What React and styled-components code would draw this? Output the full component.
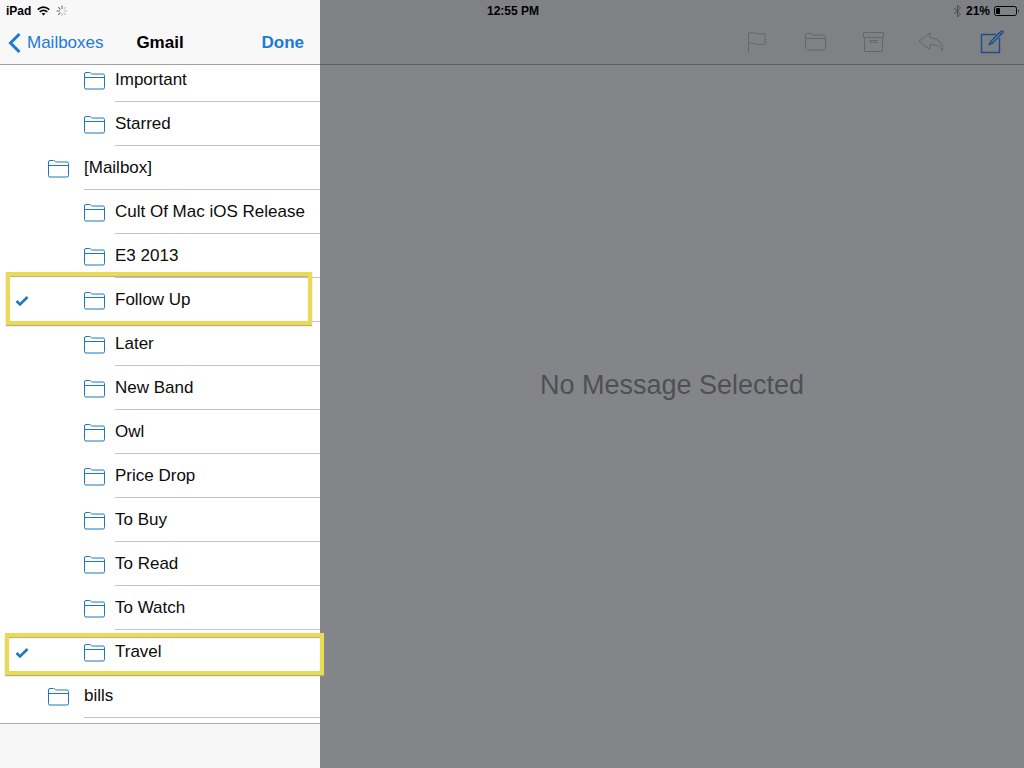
import React, { useState } from "react";
import styled, { createGlobalStyle } from "styled-components";

const folders = [
  { name: "Important", nested: true },
  { name: "Starred", nested: true },
  { name: "[Mailbox]" },
  { name: "Cult Of Mac iOS Release", nested: true },
  { name: "E3 2013", nested: true },
  { name: "Follow Up", nested: true, mark: "tall" },
  { name: "Later", nested: true },
  { name: "New Band", nested: true },
  { name: "Owl", nested: true },
  { name: "Price Drop", nested: true },
  { name: "To Buy", nested: true },
  { name: "To Read", nested: true },
  { name: "To Watch", nested: true },
  { name: "Travel", nested: true, mark: "wide" },
  { name: "bills" },
];

const FolderIcon = () => (
  <svg width="21" height="18" viewBox="0 0 21 18" fill="none" stroke="currentColor" aria-hidden="true">
    <path d="M.5 15.500V2Q.5.500 2 .5h3.500q1 0 1.500.7.5.8 1.500.8H19q1.500 0 1.500 1.500v12q0 1.500-1.500 1.500H2Q.5 17 .5 15.500z" />
    <path d="M.5 5.500h20" />
  </svg>
);

const FlagIcon = () => (
  <svg width="18" height="21" viewBox="0 0 18 21" fill="none" stroke="currentColor" aria-hidden="true">
    <path d="M.5 20.500V1C5-.5 11 3.500 17 1.500v10.500C11 14 5.500 10 .5 11.500" />
  </svg>
);

const ArchiveIcon = () => (
  <svg width="21" height="20" viewBox="0 0 21 20" fill="none" stroke="currentColor" aria-hidden="true">
    <path d="M.5.500h20v5H.5zM1.500 5.500v14h18v-14M7 8.500h7v2H7z" />
  </svg>
);

const ReplyIcon = () => (
  <svg width="26" height="20" viewBox="0 0 26 20" fill="none" stroke="currentColor" aria-hidden="true">
    <path d="M12 1v5C19 6 25 10 24.500 18.500c-2.500-4-6-6-12.500-6v5L1 9.200z" />
  </svg>
);

const ComposeIcon = () => (
  <svg width="24" height="24" viewBox="0 0 24 24" fill="none" stroke="currentColor" aria-hidden="true">
    <path d="M16 4.500H1.500v18h18V8" strokeWidth="1.400" />
    <path d="M9.500 14.500l1.200-3L21 1.200q1-.7 1.700 0t0 1.700L12.500 13.200zM19.500 2.700l1.700 1.700" strokeWidth="1.400" />
  </svg>
);

const WifiIcon = () => (
  <svg width="13" height="10" viewBox="0 0 13 10" fill="none" stroke="currentColor" aria-hidden="true">
    <path d="M.7 3.700q5.800-5 11.600 0M2.700 5.900q3.800-3.200 7.600 0" strokeWidth="1.600" />
    <path d="M6.500 9.500L4.500 7.600q2-1.400 4 0z" fill="currentColor" stroke="none" />
  </svg>
);

const Spinner = () => (
  <svg width="12" height="12" viewBox="0 0 12 12" stroke="#555" strokeLinecap="round" aria-hidden="true">
    {[0, 45, 90, 135, 180, 225, 270, 315].map((angle) => (
      <path
        key={angle}
        d="M6 1v2.500"
        opacity={angle > 0 && angle < 225 ? 0.35 : 0.9}
        transform={`rotate(${angle} 6 6)`}
      />
    ))}
  </svg>
);

const BluetoothIcon = () => (
  <svg width="9" height="14" viewBox="0 0 9 14" fill="none" stroke="#4c4d51" aria-hidden="true">
    <path d="M1 4l6.500 6L4.500 13V1l3 3L1 10" />
  </svg>
);

const BatteryIcon = () => (
  <svg width="26" height="10" viewBox="0 0 26 10" fill="none" stroke="currentColor" aria-hidden="true">
    <rect x=".5" y=".5" width="22" height="9" rx="2" />
    <rect x="2" y="2" width="4" height="6" rx="1" fill="currentColor" stroke="none" />
    <path d="M24 3q1.500 2 0 4z" fill="currentColor" stroke="none" />
  </svg>
);

const App = () => {
  const [checked, setChecked] = useState(["Follow Up", "Travel"]);

  const toggle = (name) => {
    setChecked(
      checked.includes(name)
        ? checked.filter((item) => item !== name)
        : [...checked, name]
    );
  };

  return (
    <>
      <GlobalStyle />
      <Screen>
        <StatusBar>
          <StatusGroup>
            iPad <WifiIcon /> <Spinner />
          </StatusGroup>
          <span>12:55 PM</span>
          <StatusGroup $end>
            <BluetoothIcon /> 21% <BatteryIcon />
          </StatusGroup>
        </StatusBar>

        <Sidebar>
          <SideHeader>
            <BackButton type="button">
              <svg width="13" height="20" viewBox="0 0 13 20" fill="none" stroke="currentColor" strokeWidth="3" aria-hidden="true">
                <path d="M11.500 1L2.500 10l9 9" />
              </svg>
              Mailboxes
            </BackButton>
            <Title>Gmail</Title>
            <DoneButton type="button">Done</DoneButton>
          </SideHeader>
          <List>
            {folders.map((folder) => (
              <Row key={folder.name}>
                <RowLabel>
                  <Tick>
                    <TickInput
                      type="checkbox"
                      checked={checked.includes(folder.name)}
                      onChange={() => toggle(folder.name)}
                    />
                    <svg width="14" height="12" viewBox="0 0 14 12" fill="none" stroke="currentColor" strokeWidth="2.500" aria-hidden="true">
                      <path d="M1.500 6L5 9.500l7.500-7.500" />
                    </svg>
                  </Tick>
                  <FolderCell $nested={folder.nested}>
                    <FolderIcon />
                  </FolderCell>
                  <Name>{folder.name}</Name>
                </RowLabel>
                {folder.mark && <Mark $wide={folder.mark === "wide"} />}
              </Row>
            ))}
          </List>
          <SideFooter />
        </Sidebar>

        <Detail>
          <Toolbar>
            <ToolButton type="button" aria-label="Flag"><FlagIcon /></ToolButton>
            <ToolButton type="button" aria-label="Move"><FolderIcon /></ToolButton>
            <ToolButton type="button" aria-label="Archive"><ArchiveIcon /></ToolButton>
            <ToolButton type="button" aria-label="Reply"><ReplyIcon /></ToolButton>
            <ToolButton type="button" aria-label="Compose" $active><ComposeIcon /></ToolButton>
          </Toolbar>
          <Empty>No Message Selected</Empty>
        </Detail>
      </Screen>
    </>
  );
};

const GlobalStyle = createGlobalStyle`
  * {
    box-sizing: border-box;
  }
  body {
    margin: 0;
    font-family: "Liberation Sans", Arial, sans-serif;
    color: #000;
  }
  button {
    font: inherit;
    background: none;
    border: 0;
    padding: 0;
    cursor: pointer;
  }
  svg {
    display: block;
    flex: none;
  }
`;

const Screen = styled.div`
  display: grid;
  grid-template-columns: 320px 1fr;
  grid-template-rows: 20px 1fr;
  height: 100vh;
  overflow: hidden;
`;

const StatusBar = styled.div`
  grid-area: 1 / 1 / 2 / 3;
  z-index: 3;
  display: grid;
  grid-template-columns: 1fr auto 1fr;
  align-items: center;
  padding: 2px 4px 0 6px;
  font-size: 12px;
  font-weight: bold;
`;

const StatusGroup = styled.div`
  display: flex;
  align-items: center;
  justify-content: ${(props) => (props.$end ? "flex-end" : "flex-start")};
  gap: ${(props) => (props.$end ? "4px" : "6px")};
`;

const Sidebar = styled.aside`
  grid-area: 1 / 1 / 3 / 2;
  z-index: 2;
  display: flex;
  flex-direction: column;
  min-height: 0;
  background: #fff;
`;

const SideHeader = styled.header`
  display: grid;
  grid-template-columns: 1fr auto 1fr;
  align-items: center;
  height: 65px;
  padding-top: 21px;
  background: #f8f8f9;
  border-bottom: 1px solid #a0a0a3;
  font-size: 17px;
`;

const BackButton = styled.button`
  display: flex;
  align-items: center;
  gap: 6px;
  && {
    padding-left: 8px;
  }
  color: #1c7ad9;
`;

const Title = styled.h1`
  margin: 0;
  font-size: 17px;
  font-weight: bold;
`;

const DoneButton = styled.button`
  justify-self: end;
  color: #1c7ad9;
  && {
    padding-right: 16px;
    font-weight: bold;
  }
`;

/* scrolled to the end, the first row slides under the header */
const List = styled.ul`
  flex: 1;
  min-height: 0;
  display: flex;
  flex-direction: column;
  justify-content: flex-end;
  margin: 0;
  padding: 0 0 5px;
  list-style: none;
  overflow-x: visible;
  overflow-y: clip;
`;

const Row = styled.li`
  position: relative;
  flex: none;
  height: 44px;
`;

const RowLabel = styled.label`
  display: flex;
  align-items: center;
  height: 100%;
  padding-left: 15px;
  color: #1f78b8;
`;

const Tick = styled.span`
  display: grid;
  width: 33px;
  padding-top: 2px;
  svg,
  input {
    grid-area: 1 / 1;
  }
  svg {
    visibility: hidden;
    pointer-events: none;
  }
  input:checked + svg {
    visibility: visible;
  }
`;

const TickInput = styled.input`
  appearance: none;
  width: 14px;
  height: 12px;
  margin: 0;
`;

const FolderCell = styled.span`
  width: ${(props) => (props.$nested ? "67px" : "36px")};
  padding-left: ${(props) => (props.$nested ? "36px" : "0")};
  padding-top: 2px;
`;

const Name = styled.span`
  flex: 1;
  height: 100%;
  border-bottom: 1px solid #c4c4c8;
  color: #0c0c0c;
  font-size: 17px;
  line-height: 44px;
  white-space: nowrap;
`;

const Mark = styled.div`
  position: absolute;
  z-index: 1;
  top: ${(props) => (props.$wide ? "3px" : "-6px")};
  bottom: ${(props) => (props.$wide ? "-1px" : "-3px")};
  left: ${(props) => (props.$wide ? "5px" : "6px")};
  right: ${(props) => (props.$wide ? "-4px" : "8px")};
  border: 4px solid #eadb57;
  box-shadow: 0 1px 1px #b5ac80, inset 0 1px 1px #b5ac80;
  pointer-events: none;
`;

const SideFooter = styled.footer`
  height: 45px;
  background: #f6f6f7;
  border-top: 1px solid #a9a9ac;
`;

const Detail = styled.main`
  grid-area: 1 / 2 / 3 / 3;
  display: flex;
  flex-direction: column;
  background: #848589;
`;

const Toolbar = styled.div`
  display: flex;
  align-items: center;
  justify-content: flex-end;
  gap: 14px;
  height: 65px;
  padding: 20px 7px 0 0;
  background: #808185;
  border-bottom: 1px solid #5e5f62;
`;

const ToolButton = styled.button`
  display: grid;
  place-items: center;
  width: ${(props) => (props.$active ? "50px" : "44px")};
  height: 44px;
  color: ${(props) => (props.$active ? "#1a4f8c" : "#66676b")};
`;

const Empty = styled.p`
  flex: 1;
  display: grid;
  place-items: center;
  margin: 0;
  padding-bottom: 62px;
  color: #4f5054;
  font-size: 27px;
`;

export default App;
